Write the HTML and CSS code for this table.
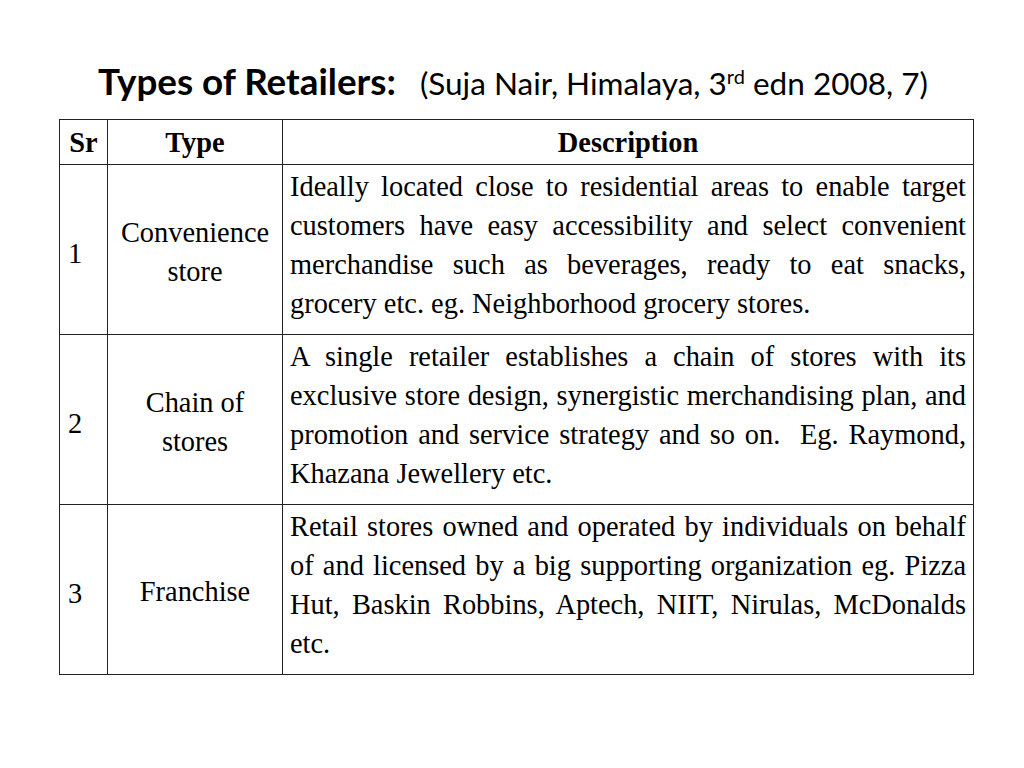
FILE: index.html
```html
<!DOCTYPE html>
<html>
<head>
<meta charset="utf-8">
<link rel="stylesheet" href="styles.css">
</head>
<body>
<div class="slide">
  <h1 class="title"><span class="main">Types of Retailers:</span><span class="cite">(Suja Nair, Himalaya, 3<sup>rd</sup> edn 2008, 7)</span></h1>
  <table class="grid">
    <colgroup><col class="c-sr"><col class="c-type"><col class="c-desc"></colgroup>
    <thead>
      <tr><th class="sr">Sr</th><th>Type</th><th>Description</th></tr>
    </thead>
    <tbody>
      <tr>
        <td class="sr">1</td>
        <td class="type">Convenience store</td>
        <td class="desc">Ideally located close to residential areas to enable target customers have easy accessibility and select convenient merchandise such as beverages, ready to eat snacks, grocery etc. eg. Neighborhood grocery stores.</td>
      </tr>
      <tr>
        <td class="sr">2</td>
        <td class="type">Chain of<br>stores</td>
        <td class="desc">A single retailer establishes a chain of stores with its exclusive store design, synergistic merchandising plan, and promotion and service strategy and so on.&nbsp; Eg. Raymond, Khazana Jewellery etc.</td>
      </tr>
      <tr>
        <td class="sr">3</td>
        <td class="type">Franchise</td>
        <td class="desc">Retail stores owned and operated by individuals on behalf of and licensed by a big supporting organization eg. Pizza Hut, Baskin Robbins, Aptech, NIIT, Nirulas, McDonalds etc.</td>
      </tr>
    </tbody>
  </table>
</div>
</body>
</html>
```

FILE: styles.css
```css
html, body {
  margin: 0;
  padding: 0;
  background: #ffffff;
}
.slide {
  width: 1024px;
  height: 768px;
  box-sizing: border-box;
  padding-top: 58px;
  color: #000;
}
.title {
  margin: 0 0 14px 98px;
  height: 47px;
  font-family: Lato, "Open Sans", sans-serif;
  font-weight: normal;
  white-space: nowrap;
  line-height: 47px;
}
.title .main {
  font-weight: bold;
  font-size: 36.8px;
  margin-right: 24px;
}
.title .cite {
  font-size: 31.5px;
}
.title sup {
  font-size: 20px;
  line-height: 0;
  vertical-align: 11px;
}
.grid {
  margin-left: 59px;
  width: 915px;
  border-collapse: collapse;
  font-family: "Liberation Serif", "Times New Roman", serif;
  font-size: 28.4px;
  line-height: 39px;
}
.c-sr { width: 48px; }
.c-type { width: 175px; }
.grid th, .grid td {
  border: 1.5px solid #222;
  padding: 0 7px;
  vertical-align: middle;
}
.grid th {
  height: 44px;
  font-weight: bold;
  text-align: center;
}
.grid th.sr { padding: 0 4px; }
.grid td.sr {
  text-align: left;
  padding: 8px 8px 0;
}
.grid td.type {
  text-align: center;
  padding: 4px 2px 0;
}
.grid td.desc {
  text-align: justify;
  vertical-align: top;
  height: 170px;
  box-sizing: border-box;
  padding-top: 2px;
  padding-bottom: 8px;
}
```
